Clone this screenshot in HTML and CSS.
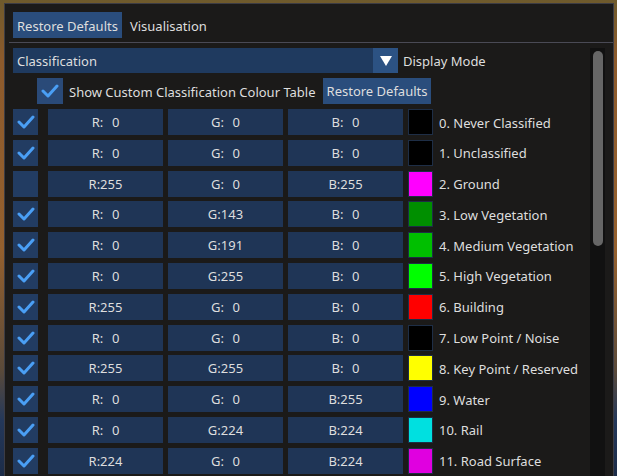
FILE: index.html
```html
<!DOCTYPE html>
<html>
<head>
<meta charset="utf-8">
<link rel="stylesheet" href="styles.css">
</head>
<body>
<div class="window">
  <div class="tabs">
    <div class="tab active">Restore Defaults</div>
    <div class="tab">Visualisation</div>
  </div>
  <div class="sep"></div>
  <div class="content">
    <div class="main">
      <div class="combo-row">
        <div class="combo">
          <span class="combo-text">Classification</span>
          <span class="combo-arrow"><svg width="12" height="10" viewBox="0 0 12 10"><polygon points="0,0 12,0 6,10" fill="#ffffff"/></svg></span>
        </div>
        <span class="lbl">Display Mode</span>
      </div>
      <div class="check-row">
        <span class="cb big"><svg width="18" height="14" viewBox="0 0 18 14"><polyline points="2,7 7,12 16,2" fill="none" stroke="#4a9ff5" stroke-width="3" stroke-linecap="round" stroke-linejoin="round"/></svg></span>
        <span class="lbl">Show Custom Classification Colour Table</span>
        <span class="btn">Restore Defaults</span>
      </div>
      <div class="table" id="table"></div>
    </div>
    <div class="scroll"><div class="thumb"></div></div>
  </div>
</div>
<script src="app.js"></script>
</body>
</html>
```
FILE: app.js
```js
var rows = [
  [1,0,0,0,"#000000","0. Never Classified"],
  [1,0,0,0,"#000000","1. Unclassified"],
  [0,255,0,255,"#ff00ff","2. Ground"],
  [1,0,143,0,"#008f00","3. Low Vegetation"],
  [1,0,191,0,"#00bf00","4. Medium Vegetation"],
  [1,0,255,0,"#00ff00","5. High Vegetation"],
  [1,255,0,0,"#ff0000","6. Building"],
  [1,0,0,0,"#000000","7. Low Point / Noise"],
  [1,255,255,0,"#ffff00","8. Key Point / Reserved"],
  [1,0,0,255,"#0000ff","9. Water"],
  [1,0,224,224,"#00e0e0","10. Rail"],
  [1,224,0,224,"#e000e0","11. Road Surface"]
];
function f(p, n){ return n === 0 ? p + ":\u2002\u20090" : p + ":" + n; }
var check = '<svg width="18" height="14" viewBox="0 0 18 14"><polyline points="2,7 7,12 16,2" fill="none" stroke="#4a9ff5" stroke-width="3" stroke-linecap="round" stroke-linejoin="round"/></svg>';
var html = "";
rows.forEach(function(r){
  html += '<div class="row">' +
    '<span class="cb">' + (r[0] ? check : '') + '</span>' +
    '<span class="field">' + f("R", r[1]) + '</span>' +
    '<span class="field">' + f("G", r[2]) + '</span>' +
    '<span class="field">' + f("B", r[3]) + '</span>' +
    '<span class="swatch" style="background:' + r[4] + '"></span>' +
    '<span class="lbl">' + r[5] + '</span>' +
    '</div>';
});
document.getElementById("table").innerHTML = html;
```
FILE: styles.css
```css
html, body {
  margin: 0;
  padding: 0;
  height: 476px;
  overflow: hidden;
}
body {
  background: linear-gradient(180deg, #6e5a2c 0px, #8c5a2c 60px, #94602e 250px, #5a4a3a 370px, #24385a 420px, #1c2c48 476px);
  font-family: "Noto Sans", "Open Sans", sans-serif;
  font-size: 13px;
  color: #dedede;
}
.window {
  margin: 3px 3px 0 4px;
  height: 490px;
  background: #1b1a19;
  border: 1px solid #3c3c44;
  padding: 8px 0 0 8px;
  box-sizing: border-box;
}
.tabs {
  display: flex;
  gap: 2px;
  height: 26px;
}
.tab {
  padding: 2px 4px 0 4px;
  line-height: 24px;
  height: 26px;
  box-sizing: border-box;
}
.tab.active {
  background: #2a4d7c;
}
.tab + .tab {
  margin-left: 2px;
}
.sep {
  height: 1px;
  background: #4a4a55;
  margin: 4px 0 5px -4px;
}
.content {
  display: flex;
}
.main {
  width: 577px;
}
.combo-row {
  display: flex;
  align-items: center;
  height: 25px;
}
.combo {
  width: 385px;
  height: 25px;
  background: #1f3a5f;
  display: flex;
  align-items: center;
  justify-content: space-between;
}
.combo-text {
  padding: 1px 0 0 4px;
}
.combo-arrow {
  width: 25px;
  height: 25px;
  background: #2c5283;
  display: flex;
  align-items: center;
  justify-content: center;
}
.combo-row .lbl {
  margin-left: 5px;
  padding-top: 1px;
}
.check-row {
  display: flex;
  align-items: center;
  height: 26px;
  margin-top: 5px;
  padding-left: 24px;
}
.cb {
  width: 25px;
  height: 26px;
  background: #223c62;
  display: flex;
  align-items: center;
  justify-content: center;
  flex: none;
}
.cb.big {
  width: 26px;
  background: #2a4a78;
}
.check-row .lbl {
  margin-left: 6px;
  padding-top: 1px;
}
.btn {
  margin-left: 7px;
  height: 26px;
  line-height: 25px;
  padding: 1px 4px 0;
  box-sizing: border-box;
  background: #2a4d7c;
}
.table {
  margin-top: 5px;
  display: flex;
  flex-direction: column;
  gap: 4.8px;
}
.row {
  display: flex;
  align-items: center;
  height: 26px;
}
.field {
  width: 115px;
  height: 26px;
  line-height: 25px;
  padding-top: 1px;
  box-sizing: border-box;
  text-align: center;
  background: #1f3556;
  margin-left: 5px;
  white-space: pre;
}
.row .cb + .field {
  margin-left: 10px;
}
.swatch {
  width: 23px;
  height: 24px;
  border: 1px solid #1e2e46;
  margin-left: 5px;
  flex: none;
}
.row .lbl {
  margin-left: 6px;
  padding-top: 1px;
  white-space: nowrap;
}
.scroll {
  width: 15px;
  height: 440px;
  background: #111111;
  padding: 3px 2px 0 3px;
  box-sizing: border-box;
}
.thumb {
  width: 10px;
  height: 195px;
  background: #666666;
  border-radius: 5px;
}
```
